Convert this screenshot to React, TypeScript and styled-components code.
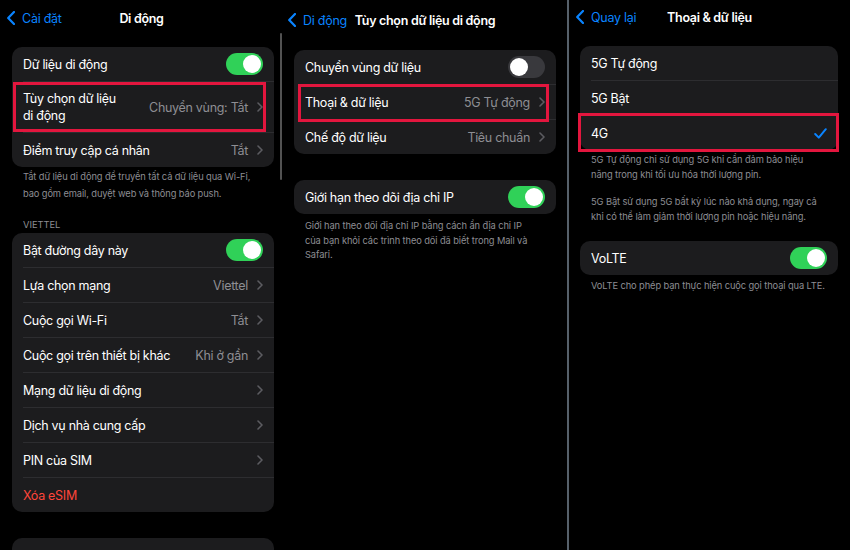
import React from "react";
import styled, { createGlobalStyle } from "styled-components";

const GlobalStyle = createGlobalStyle`
  html, body {
    margin: 0;
    padding: 0;
    background: #000;
  }
  body {
    font-family: Inter, "Noto Sans", "Liberation Sans", sans-serif;
    -webkit-font-smoothing: antialiased;
  }
`;

const Screen = styled.div`
  display: flex;
  width: 850px;
  height: 550px;
  overflow: hidden;
  background: #000;
`;

const Panel = styled.div<{ $w: number }>`
  position: relative;
  width: ${(p) => p.$w}px;
  flex-shrink: 0;
  display: flex;
  flex-direction: column;
`;

const Split = styled.div`
  width: 2px;
  flex-shrink: 0;
  background: #56606a;
`;

const ScrollBar = styled.div`
  position: absolute;
  right: 1px;
  top: 33px;
  width: 2px;
  height: 147px;
  border-radius: 1px;
  background: rgba(255, 255, 255, 0.32);
`;

const Nav = styled.div<{ $h: number }>`
  height: ${(p) => p.$h}px;
  flex-shrink: 0;
  display: grid;
  grid-template-columns: 1fr auto 1fr;
  align-items: center;
`;

const Back = styled.div<{ $pl: number }>`
  display: flex;
  align-items: center;
  gap: 7px;
  padding-left: ${(p) => p.$pl}px;
  color: #0a84ff;
  font-size: 12.5px;
  letter-spacing: -0.25px;
  white-space: nowrap;
`;

const Title = styled.div`
  color: #fff;
  font-size: 12.5px;
  font-weight: 600;
  letter-spacing: -0.3px;
  white-space: nowrap;
`;

const Body = styled.div<{ $pl: number; $pr: number }>`
  display: flex;
  flex-direction: column;
  padding: 0 ${(p) => p.$pr}px 0 ${(p) => p.$pl}px;
`;

const Card = styled.div<{ $mt: number; $h?: number }>`
  margin-top: ${(p) => p.$mt}px;
  ${(p) => (p.$h ? `height: ${p.$h}px;` : "")}
  background: #1c1c1e;
  border-radius: 10px;
  display: flex;
  flex-direction: column;
  flex-shrink: 0;
`;

const Divider = styled.div`
  height: 1px;
  margin-left: 11px;
  background: #2d2d30;
`;

const Row = styled.div<{ $h?: number; $box?: string }>`
  position: relative;
  display: flex;
  align-items: center;
  justify-content: space-between;
  gap: 8px;
  height: ${(p) => p.$h ?? 34}px;
  padding: 0 11px;
  color: #fff;
  font-size: 12.5px;
  letter-spacing: -0.3px;

  ${(p) =>
    p.$box
      ? `&::after {
    content: "";
    position: absolute;
    inset: ${p.$box};
    border: 3px solid #e3163e;
    pointer-events: none;
  }`
      : ""}
`;

const Label = styled.span<{ $danger?: boolean }>`
  color: ${(p) => (p.$danger ? "#ff453a" : "#fff")};
  line-height: 17px;
  white-space: nowrap;
`;

const Trailing = styled.div`
  display: flex;
  align-items: center;
  gap: 9px;
  color: #8e8e93;
  white-space: nowrap;
`;

const Toggle = styled.div<{ $on: boolean }>`
  width: 37px;
  height: 22px;
  border-radius: 11px;
  padding: 2px;
  box-sizing: border-box;
  display: flex;
  align-items: center;
  justify-content: ${(p) => (p.$on ? "flex-end" : "flex-start")};
  background: ${(p) => (p.$on ? "#30d158" : "#39393d")};
`;

const Knob = styled.span`
  width: 18px;
  height: 18px;
  border-radius: 50%;
  background: #fff;
`;

const Note = styled.p<{ $lh: number; $mt: number }>`
  margin: ${(p) => p.$mt}px 0 0;
  padding: 0 11px;
  color: #8d8d93;
  font-size: 9.3px;
  letter-spacing: -0.1px;
  line-height: ${(p) => p.$lh}px;
  white-space: nowrap;
`;

const Section = styled.div`
  margin-top: 17px;
  padding: 0 11px;
  color: #8d8d93;
  font-size: 9.3px;
  line-height: 12px;
  text-transform: uppercase;
`;

const BackChevron = () => (
  <svg width="8" height="14" viewBox="0 0 8 14">
    <path d="M7 1 L1.2 7 L7 13" fill="none" stroke="#0a84ff" strokeWidth="2.2" strokeLinecap="round" strokeLinejoin="round" />
  </svg>
);

const Chevron = () => (
  <svg width="6" height="10" viewBox="0 0 6 10">
    <path d="M1 1 L5 5 L1 9" fill="none" stroke="#5c5c61" strokeWidth="1.6" strokeLinecap="round" strokeLinejoin="round" />
  </svg>
);

const Check = () => (
  <svg width="13" height="11" viewBox="0 0 13 11">
    <path d="M1.2 6 L4.8 9.6 L11.8 1.2" fill="none" stroke="#0a84ff" strokeWidth="2" strokeLinecap="round" strokeLinejoin="round" />
  </svg>
);

const Switch = ({ on }: { on: boolean }) => (
  <Toggle $on={on}>
    <Knob />
  </Toggle>
);

const Detail = ({ value }: { value?: string }) => (
  <Trailing>
    {value && <span>{value}</span>}
    <Chevron />
  </Trailing>
);

const NavBar = ({ h, pl, back, title }: { h: number; pl: number; back: string; title: string }) => (
  <Nav $h={h}>
    <Back $pl={pl}>
      <BackChevron />
      {back}
    </Back>
    <Title>{title}</Title>
    <span />
  </Nav>
);

const viettelRows: { label: string; value?: string }[] = [
  { label: "Lựa chọn mạng", value: "Viettel" },
  { label: "Cuộc gọi Wi-Fi", value: "Tắt" },
  { label: "Cuộc gọi trên thiết bị khác", value: "Khi ở gần" },
  { label: "Mạng dữ liệu di động" },
  { label: "Dịch vụ nhà cung cấp" },
  { label: "PIN của SIM" },
];

const App = () => {
  return (
    <>
      <GlobalStyle />
      <Screen>
        {/* Di động */}
        <Panel $w={283}>
          <ScrollBar />
          <NavBar h={36} pl={7} back="Cài đặt" title="Di động" />
          <Body $pl={12} $pr={9}>
            <Card $mt={11}>
              <Row>
                <Label>Dữ liệu di động</Label>
                <Switch on />
              </Row>
              <Divider />
              <Row $h={50} $box="0 8px 0 1px">
                <Label>
                  Tùy chọn dữ liệu
                  <br />
                  di động
                </Label>
                <Detail value="Chuyển vùng: Tắt" />
              </Row>
              <Divider />
              <Row>
                <Label>Điểm truy cập cá nhân</Label>
                <Detail value="Tắt" />
              </Row>
            </Card>
            <Note $lh={17} $mt={1}>
              Tắt dữ liệu di động để truyền tất cả dữ liệu qua Wi-Fi,
              <br />
              bao gồm email, duyệt web và thông báo push.
            </Note>
            <Section>Viettel</Section>
            <Card $mt={2}>
              <Row>
                <Label>Bật đường dây này</Label>
                <Switch on />
              </Row>
              {viettelRows.map((r) => (
                <React.Fragment key={r.label}>
                  <Divider />
                  <Row>
                    <Label>{r.label}</Label>
                    <Detail value={r.value} />
                  </Row>
                </React.Fragment>
              ))}
              <Divider />
              <Row>
                <Label $danger>Xóa eSIM</Label>
              </Row>
            </Card>
            <Card $mt={26} $h={60} />
          </Body>
        </Panel>

        {/* Tùy chọn dữ liệu di động */}
        <Panel $w={284}>
          <NavBar h={40} pl={5} back="Di động" title="Tùy chọn dữ liệu di động" />
          <Body $pl={11} $pr={11}>
            <Card $mt={10}>
              <Row>
                <Label>Chuyển vùng dữ liệu</Label>
                <Switch on={false} />
              </Row>
              <Divider />
              <Row $box="-1px 7px -3px 4px">
                <Label>Thoại &amp; dữ liệu</Label>
                <Detail value="5G Tự động" />
              </Row>
              <Divider />
              <Row>
                <Label>Chế độ dữ liệu</Label>
                <Detail value="Tiêu chuẩn" />
              </Row>
            </Card>
            <Card $mt={26}>
              <Row>
                <Label>Giới hạn theo dõi địa chỉ IP</Label>
                <Switch on />
              </Row>
            </Card>
            <Note $lh={14.5} $mt={5}>
              Giới hạn theo dõi địa chỉ IP bằng cách ẩn địa chỉ IP
              <br />
              của bạn khỏi các trình theo dõi đã biết trong Mail và
              <br />
              Safari.
            </Note>
          </Body>
        </Panel>

        <Split />

        {/* Thoại & dữ liệu */}
        <Panel $w={281}>
          <NavBar h={34} pl={7} back="Quay lại" title="Thoại & dữ liệu" />
          <Body $pl={11} $pr={12}>
            <Card $mt={12}>
              <Row>
                <Label>5G Tự động</Label>
              </Row>
              <Divider />
              <Row>
                <Label>5G Bật</Label>
              </Row>
              <Divider />
              <Row $box="-3px -1px -2px -2px">
                <Label>4G</Label>
                <Check />
              </Row>
            </Card>
            <Note $lh={15} $mt={2}>
              5G Tự động chỉ sử dụng 5G khi cần đảm bảo hiệu
              <br />
              năng trong khi tối ưu hóa thời lượng pin.
            </Note>
            <Note $lh={15} $mt={12}>
              5G Bật sử dụng 5G bất kỳ lúc nào khả dụng, ngay cả
              <br />
              khi có thể làm giảm thời lượng pin hoặc hiệu năng.
            </Note>
            <Card $mt={17}>
              <Row>
                <Label>VoLTE</Label>
                <Switch on />
              </Row>
            </Card>
            <Note $lh={15} $mt={3}>
              VoLTE cho phép bạn thực hiện cuộc gọi thoại qua LTE.
            </Note>
          </Body>
        </Panel>
      </Screen>
    </>
  );
};

export default App;
